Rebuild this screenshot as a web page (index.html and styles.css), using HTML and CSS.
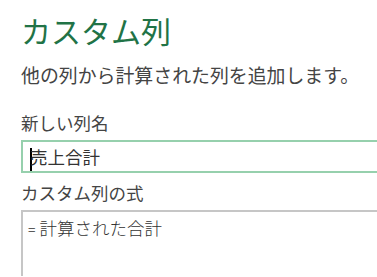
FILE: index.html
```html
<!DOCTYPE html>
<html lang="ja">
<head>
    <meta charset="UTF-8">
    <title>カスタム列</title>
    <link rel="stylesheet" href="styles.css">
</head>
<body>
    <div class="dialog">
        <h1 class="title">カスタム列</h1>
        <p class="subtitle">他の列から計算された列を追加します。</p>

        <label class="field-label">新しい列名</label>
        <div class="input-box"><span class="caret"></span>売上合計</div>

        <label class="field-label second">カスタム列の式</label>
        <div class="formula-box"><span class="eq">=</span>計算された合計</div>
    </div>
</body>
</html>
```

FILE: styles.css
```css
body {
    margin: 0;
    background-color: #fff;
    font-family: "Noto Sans CJK JP", "Noto Sans", sans-serif;
    color: #444;
    overflow: hidden;
}
.dialog {
    padding: 10px 0 0 21px;
    width: 420px;
}
.title {
    margin: 0;
    font-size: 30px;
    font-weight: normal;
    line-height: 40px;
    color: #217346;
}
.subtitle {
    margin: 10px 0 0 0;
    font-size: 18.9px;
    line-height: 30px;
}
.field-label {
    display: block;
    margin-top: 20px;
    font-size: 17.5px;
    line-height: 26px;
}
.field-label.second {
    margin-top: 7px;
}
.input-box {
    margin-top: 4px;
    height: 29px;
    border: 2px solid #96d0ad;
    padding: 0 0 0 7px;
    font-size: 17.5px;
    line-height: 29px;
    color: #333;
}
.caret {
    display: inline-block;
    width: 2px;
    height: 23px;
    background-color: #000;
    vertical-align: middle;
    margin-right: -2px;
}
.formula-box {
    margin-top: 4px;
    height: 60px;
    border: 2px solid #c6c6c6;
    border-bottom: none;
    padding: 4px 0 0 5px;
    font-size: 17.5px;
    line-height: 24px;
    font-weight: 300;
    color: #333;
}
.eq {
    font-size: 14px;
    margin-right: 4px;
}
```
